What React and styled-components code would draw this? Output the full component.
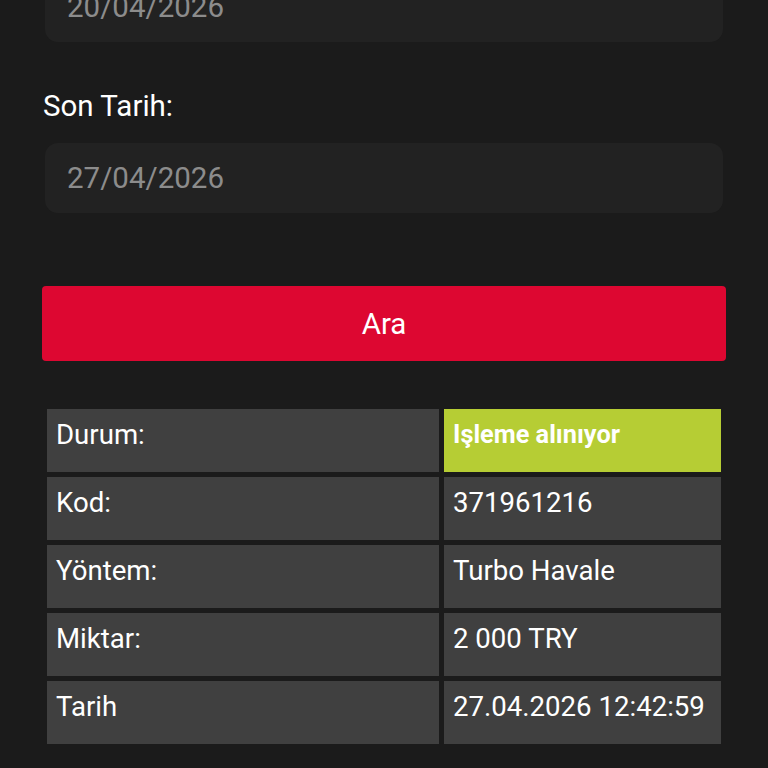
import React from 'react';
import styled, { createGlobalStyle } from 'styled-components';

const GlobalStyle = createGlobalStyle`
  html, body {
    margin: 0;
    padding: 0;
    background: #1b1b1b;
    font-family: Roboto, "Liberation Sans", sans-serif;
    overflow: hidden;
  }
`;

const Page = styled.main`
  min-height: 100vh;
  background: #1b1b1b;
  padding: 0 42px;
  box-sizing: border-box;
`;

const Form = styled.div`
  display: flex;
  flex-direction: column;
  margin-top: -28px;
`;

const Field = styled.div`
  display: flex;
  flex-direction: column;
`;

const Label = styled.label`
  color: #ffffff;
  font-size: 29.5px;
  line-height: 34px;
  margin: 47px 0 20px 1px;
`;

const DateInput = styled.div`
  height: 70px;
  margin: 0 3px;
  padding: 0 22px;
  display: flex;
  align-items: center;
  background: #222222;
  border-radius: 13px;
  color: #8c8c8c;
  font-size: 29.5px;
`;

const SearchButton = styled.button`
  margin-top: 73px;
  height: 75px;
  border: none;
  border-radius: 4px;
  background: #dd0731;
  color: #ffffff;
  font-family: inherit;
  font-size: 29.5px;
  cursor: pointer;
`;

const Table = styled.table`
  margin-top: 43px;
  width: 100%;
  border-collapse: separate;
  border-spacing: 5px;
  table-layout: fixed;
`;

const Cell = styled.td`
  height: 63px;
  box-sizing: border-box;
  padding: 10px 9px 21px;
  vertical-align: top;
  background: ${p => (p.$status ? '#b6cd34' : '#404040')};
  color: #ffffff;
  font-size: ${p => (p.$status ? '25.3px' : '27.6px')};
  font-weight: ${p => (p.$status ? 700 : 400)};
  line-height: 32px;
  white-space: nowrap;
`;

const rows = [
  ['Durum:', 'Işleme alınıyor', true],
  ['Kod:', '371961216'],
  ['Yöntem:', 'Turbo Havale'],
  ['Miktar:', '2 000 TRY'],
  ['Tarih', '27.04.2026 12:42:59'],
];

export default function App() {
  return (
    <>
      <GlobalStyle />
      <Page>
        <Form>
          <Field>
            <DateInput>20/04/2026</DateInput>
          </Field>
          <Field>
            <Label>Son Tarih:</Label>
            <DateInput>27/04/2026</DateInput>
          </Field>
          <SearchButton>Ara</SearchButton>
        </Form>
        <Table>
          <colgroup>
            <col style={{ width: '392px' }} />
            <col />
          </colgroup>
          <tbody>
            {rows.map(([k, v, status]) => (
              <tr key={k}>
                <Cell>{k}</Cell>
                <Cell $status={status}>{v}</Cell>
              </tr>
            ))}
          </tbody>
        </Table>
      </Page>
    </>
  );
}
